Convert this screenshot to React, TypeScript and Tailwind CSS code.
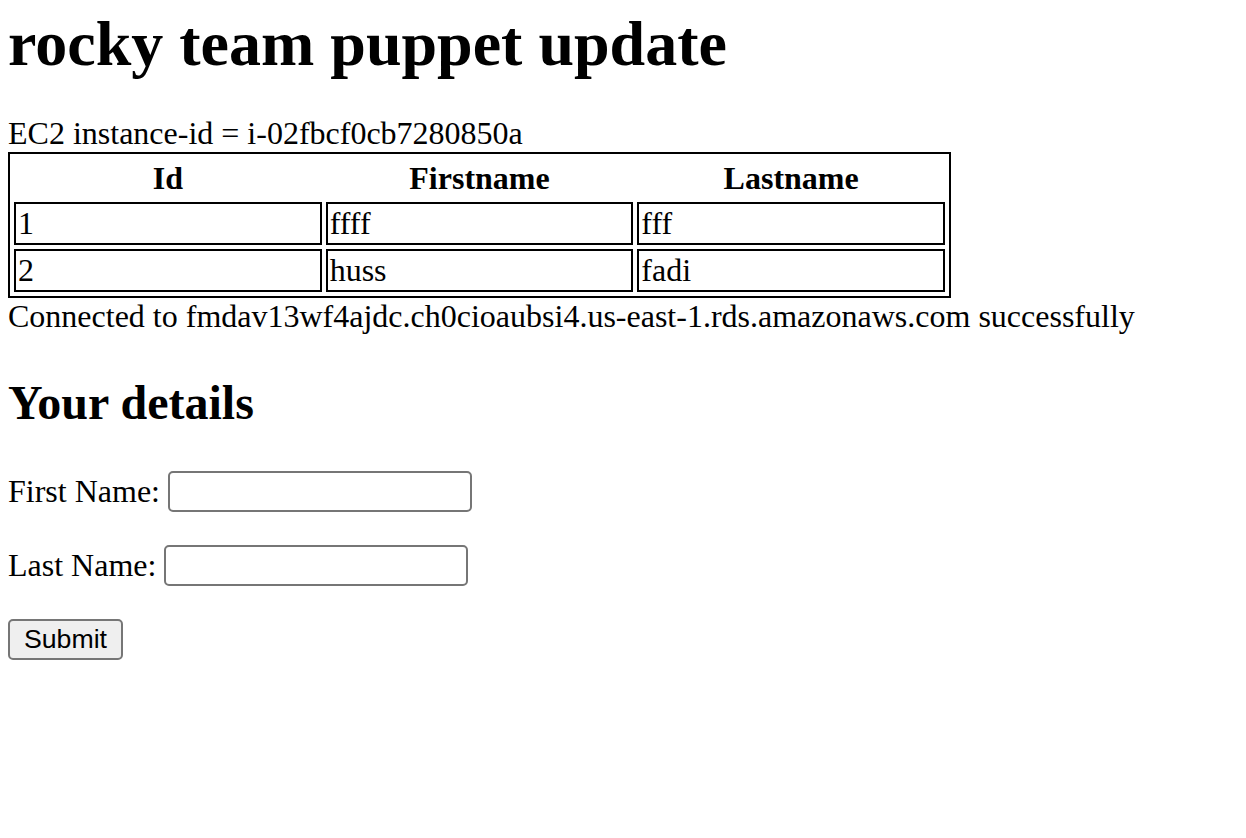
const rows = [
  { id: "1", first: "ffff", last: "fff" },
  { id: "2", first: "huss", last: "fadi" },
];

export default function App() {
  return (
    <div className="min-h-[838px] bg-white px-2 pt-[7px] font-['Liberation_Serif','Times_New_Roman',serif] text-[32px] leading-[normal] text-black">
      <h1 className="text-[64px] font-bold">rocky team puppet update</h1>
      <div className="mt-[34px]">EC2 instance-id = i-02fbcf0cb7280850a</div>

      {/* Records */}
      <table className="w-[943px] table-fixed border-separate border-spacing-1 border-2 border-black">
        <thead>
          <tr>
            <th className="p-[2px] text-center font-bold leading-[36px]">Id</th>
            <th className="p-[2px] text-center font-bold leading-[36px]">Firstname</th>
            <th className="p-[2px] text-center font-bold leading-[36px]">Lastname</th>
          </tr>
        </thead>
        <tbody>
          {rows.map(r => (
            <tr key={r.id}>
              <td className="border-2 border-black p-[2px] text-left leading-[35px]">{r.id}</td>
              <td className="border-2 border-black p-[2px] text-left leading-[35px]">{r.first}</td>
              <td className="border-2 border-black p-[2px] text-left leading-[35px]">{r.last}</td>
            </tr>
          ))}
        </tbody>
      </table>
      <div>Connected to fmdav13wf4ajdc.ch0cioaubsi4.us-east-1.rds.amazonaws.com successfully</div>

      <h2 className="my-10 text-[48px] font-bold">Your details</h2>

      {/* Form */}
      <form onSubmit={e => e.preventDefault()}>
        <div className="flex h-[42px] items-center">
          <label htmlFor="firstname">First Name:</label>
          <input
            id="firstname"
            type="text"
            className="ml-2 h-[41px] w-[304px] rounded-[5px] border-2 border-[#767676] bg-white px-1 text-[26px] outline-none"
          />
        </div>
        <div className="mt-8 flex h-[42px] items-center">
          <label htmlFor="lastname">Last Name:</label>
          <input
            id="lastname"
            type="text"
            className="ml-2 h-[41px] w-[304px] rounded-[5px] border-2 border-[#767676] bg-white px-1 text-[26px] outline-none"
          />
        </div>
        <div className="mt-8 flex h-[42px] items-center">
          <button
            type="submit"
            className="h-[41px] w-[115px] rounded-[5px] border-2 border-[#767676] bg-[#efefef] font-['Liberation_Sans',Arial,sans-serif] text-[26.7px] leading-none text-black"
          >
            Submit
          </button>
        </div>
      </form>
    </div>
  );
}
